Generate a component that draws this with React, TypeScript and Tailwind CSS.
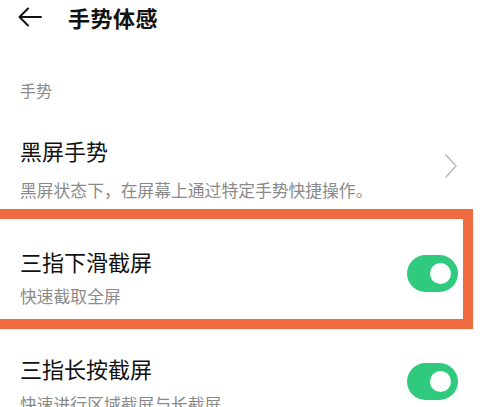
function Toggle() {
  return (
    <div className="w-[51px] h-[37px] rounded-full bg-[#2fca7e] flex items-center justify-end pr-[7px] shrink-0">
      <div className="w-[21px] h-[21px] rounded-full bg-white" />
    </div>
  );
}

function App() {
  return (
    <div
      className="relative w-[484px] h-[407px] overflow-hidden bg-white text-[#111]"
      style={{ fontFamily: '"Noto Sans CJK SC", "Noto Sans", sans-serif' }}
    >
      {/* header */}
      <div className="h-[34px] flex items-center pl-[18px]">
        <svg width="24" height="20" viewBox="0 0 24 20" fill="none" stroke="#111" strokeWidth="2" strokeLinecap="round" strokeLinejoin="round">
          <path d="M23 10H2" />
          <path d="M10 1.5L1.5 10L10 18.5" />
        </svg>
        <span className="ml-[26px] text-[22px] leading-[30px] font-bold tracking-[0.5px]">手势体感</span>
      </div>

      <div className="mt-[46px] pl-[20px] text-[16px] leading-[20px] text-[#8a8a8a]">手势</div>

      {/* row 1 */}
      <div className="mt-[35px] flex items-center pl-[20px] pr-[27px]">
        <div className="flex-1">
          <div className="text-[22px] leading-[30px]">黑屏手势</div>
          <div className="mt-[15px] text-[16.8px] leading-[20px] text-[#8a8a8a]">黑屏状态下，在屏幕上通过特定手势快捷操作。</div>
        </div>
        <svg width="12" height="24" viewBox="0 0 12 24" fill="none" stroke="#bdbdbd" strokeWidth="1.6" strokeLinecap="round" strokeLinejoin="round" className="mb-[4px]">
          <path d="M1 1L11 12L1 23" />
        </svg>
      </div>

      {/* row 2 */}
      <div className="mt-[46px] flex items-center pl-[20px] pr-[26px]">
        <div className="flex-1">
          <div className="text-[22px] leading-[30px]">三指下滑截屏</div>
          <div className="mt-[10px] text-[16.8px] leading-[20px] text-[#8a8a8a]">快速截取全屏</div>
        </div>
        <div className="mb-[5px]">
          <Toggle />
        </div>
      </div>

      {/* row 3 */}
      <div className="mt-[47px] flex items-center pl-[20px] pr-[26px]">
        <div className="flex-1">
          <div className="text-[22px] leading-[30px]">三指长按截屏</div>
          <div className="mt-[11px] text-[16.8px] leading-[20px] text-[#8a8a8a]">快速进行区域截屏与长截屏</div>
        </div>
        <div className="mb-[4px]">
          <Toggle />
        </div>
      </div>

      {/* highlight annotation */}
      <div className="absolute left-[-10px] top-[209px] w-[483px] h-[120px] border-[10px] border-[#f06a40]" />
    </div>
  );
}

export default App;
